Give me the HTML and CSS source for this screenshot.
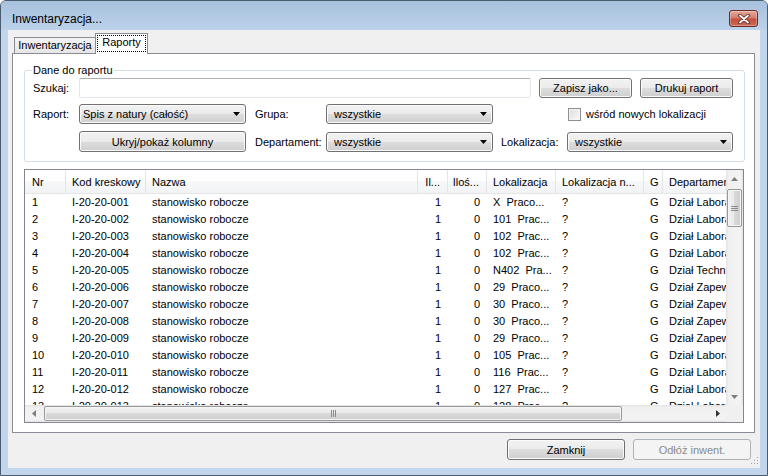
FILE: index.html
```html
<!DOCTYPE html>
<html lang="pl">

<head>
    <meta charset="UTF-8">
    <title>Inwentaryzacja...</title>
    <link rel="stylesheet" href="styles.css">
</head>

<body>
    <div class="window">
        <div class="titlebar">
            <span class="title">Inwentaryzacja...</span>
            <div class="close">
                <svg width="12" height="10" viewBox="0 0 12 10">
                    <path d="M2 1.5 L10 8.5 M10 1.5 L2 8.5" stroke="#5b2a24" stroke-width="3.6" stroke-linecap="round" />
                    <path d="M2 1.5 L10 8.5 M10 1.5 L2 8.5" stroke="#fff" stroke-width="1.8" stroke-linecap="round" />
                </svg>
            </div>
        </div>

        <div class="client">
            <div class="tabs">
                <div class="tab">Inwentaryzacja</div>
                <div class="tab active"><span class="focus">Raporty</span></div>
            </div>

            <div class="panel">
                <fieldset class="group">
                    <legend>Dane do raportu</legend>
                    <div class="row r1">
                        <span class="lbl">Szukaj:</span>
                        <div class="text"></div>
                        <div class="btn w93 ml8">Zapisz jako...</div>
                        <div class="btn w93 ml8">Drukuj raport</div>
                    </div>
                    <div class="row r2">
                        <span class="lbl">Raport:</span>
                        <div class="btn combo first">
                            <span>Spis z natury (całość)</span>
                            <svg width="7" height="4" viewBox="0 0 7 4"><polygon points="0,0 7,0 3.5,4" fill="#000" /></svg>
                        </div>
                        <span class="lbl2">Grupa:</span>
                        <div class="btn combo">
                            <span>wszystkie</span>
                            <svg width="7" height="4" viewBox="0 0 7 4"><polygon points="0,0 7,0 3.5,4" fill="#000" /></svg>
                        </div>
                        <span class="check"></span>
                        <span class="check-lbl">wśród nowych lokalizacji</span>
                    </div>
                    <div class="row r3">
                        <div class="btn wide">Ukryj/pokaż kolumny</div>
                        <span class="lbl2">Departament:</span>
                        <div class="btn combo">
                            <span>wszystkie</span>
                            <svg width="7" height="4" viewBox="0 0 7 4"><polygon points="0,0 7,0 3.5,4" fill="#000" /></svg>
                        </div>
                        <span class="lbl3">Lokalizacja:</span>
                        <div class="btn combo last">
                            <span>wszystkie</span>
                            <svg width="7" height="4" viewBox="0 0 7 4"><polygon points="0,0 7,0 3.5,4" fill="#000" /></svg>
                        </div>
                    </div>
                </fieldset>

                <div class="list">
                    <div class="list-body">
                        <div class="lrow hdr">
                            <span>Nr</span><span>Kod kreskowy</span><span>Nazwa</span><span class="num">Il...</span><span class="num">Iloś...</span><span>Lokalizacja</span><span>Lokalizacja n...</span><span>G</span><span>Departament</span>
                        </div>
                        <div class="lrow"><span>1</span><span>I-20-20-001</span><span>stanowisko robocze</span><span class="num">1</span><span class="num">0</span><span>X  Praco...</span><span>?</span><span>G</span><span>Dział Labora</span></div>
                        <div class="lrow"><span>2</span><span>I-20-20-002</span><span>stanowisko robocze</span><span class="num">1</span><span class="num">0</span><span>101  Prac...</span><span>?</span><span>G</span><span>Dział Labora</span></div>
                        <div class="lrow"><span>3</span><span>I-20-20-003</span><span>stanowisko robocze</span><span class="num">1</span><span class="num">0</span><span>102  Prac...</span><span>?</span><span>G</span><span>Dział Labora</span></div>
                        <div class="lrow"><span>4</span><span>I-20-20-004</span><span>stanowisko robocze</span><span class="num">1</span><span class="num">0</span><span>102  Prac...</span><span>?</span><span>G</span><span>Dział Labora</span></div>
                        <div class="lrow"><span>5</span><span>I-20-20-005</span><span>stanowisko robocze</span><span class="num">1</span><span class="num">0</span><span>N402  Pra...</span><span>?</span><span>G</span><span>Dział Techn</span></div>
                        <div class="lrow"><span>6</span><span>I-20-20-006</span><span>stanowisko robocze</span><span class="num">1</span><span class="num">0</span><span>29  Praco...</span><span>?</span><span>G</span><span>Dział Zapew</span></div>
                        <div class="lrow"><span>7</span><span>I-20-20-007</span><span>stanowisko robocze</span><span class="num">1</span><span class="num">0</span><span>30  Praco...</span><span>?</span><span>G</span><span>Dział Zapew</span></div>
                        <div class="lrow"><span>8</span><span>I-20-20-008</span><span>stanowisko robocze</span><span class="num">1</span><span class="num">0</span><span>30  Praco...</span><span>?</span><span>G</span><span>Dział Zapew</span></div>
                        <div class="lrow"><span>9</span><span>I-20-20-009</span><span>stanowisko robocze</span><span class="num">1</span><span class="num">0</span><span>29  Praco...</span><span>?</span><span>G</span><span>Dział Zapew</span></div>
                        <div class="lrow"><span>10</span><span>I-20-20-010</span><span>stanowisko robocze</span><span class="num">1</span><span class="num">0</span><span>105  Prac...</span><span>?</span><span>G</span><span>Dział Labora</span></div>
                        <div class="lrow"><span>11</span><span>I-20-20-011</span><span>stanowisko robocze</span><span class="num">1</span><span class="num">0</span><span>116  Prac...</span><span>?</span><span>G</span><span>Dział Labora</span></div>
                        <div class="lrow"><span>12</span><span>I-20-20-012</span><span>stanowisko robocze</span><span class="num">1</span><span class="num">0</span><span>127  Prac...</span><span>?</span><span>G</span><span>Dział Labora</span></div>
                        <div class="lrow"><span>13</span><span>I-20-20-013</span><span>stanowisko robocze</span><span class="num">1</span><span class="num">0</span><span>128  Prac...</span><span>?</span><span>G</span><span>Dział Labora</span></div>
                    </div>

                    <div class="vscroll">
                        <div class="arrow">
                            <svg width="7" height="4" viewBox="0 0 7 4"><polygon points="0,4 7,4 3.5,0" fill="#7d7d7d" /></svg>
                        </div>
                        <div class="track">
                            <div class="thumb">
                                <svg width="7" height="7" viewBox="0 0 7 7">
                                    <path d="M0 1.5 H7 M0 3.5 H7 M0 5.5 H7" stroke="#8a8a8a" stroke-width="1" />
                                </svg>
                            </div>
                        </div>
                        <div class="arrow">
                            <svg width="7" height="4" viewBox="0 0 7 4"><polygon points="0,0 7,0 3.5,4" fill="#7d7d7d" /></svg>
                        </div>
                    </div>

                    <div class="hscroll">
                        <div class="arrow">
                            <svg width="4" height="7" viewBox="0 0 4 7"><polygon points="4,0 4,7 0,3.5" fill="#7d7d7d" /></svg>
                        </div>
                        <div class="track">
                            <div class="thumb">
                                <svg width="7" height="7" viewBox="0 0 7 7">
                                    <path d="M1.5 0 V7 M3.5 0 V7 M5.5 0 V7" stroke="#8a8a8a" stroke-width="1" />
                                </svg>
                            </div>
                        </div>
                        <div class="arrow">
                            <svg width="4" height="7" viewBox="0 0 4 7"><polygon points="0,0 0,7 4,3.5" fill="#333" /></svg>
                        </div>
                    </div>

                    <div class="corner"></div>
                </div>
            </div>

            <div class="actions">
                <div class="btn act">Zamknij</div>
                <div class="btn act disabled">Odłóż inwent.</div>
            </div>

            <svg class="grip" width="10" height="10" viewBox="0 0 10 10">
                <rect x="8" y="0" width="1" height="1" fill="#a0a0a0" />
                <rect x="5" y="3" width="1" height="1" fill="#a0a0a0" />
                <rect x="8" y="3" width="1" height="1" fill="#a0a0a0" />
                <rect x="2" y="6" width="1" height="1" fill="#a0a0a0" />
                <rect x="5" y="6" width="1" height="1" fill="#a0a0a0" />
                <rect x="8" y="6" width="1" height="1" fill="#a0a0a0" />
            </svg>
        </div>
    </div>
</body>

</html>
```

FILE: styles.css
```css
* {
    margin: 0;
    padding: 0;
    box-sizing: border-box;
}

body {
    width: 768px;
    height: 476px;
    overflow: hidden;
    font-family: "Liberation Sans", Arial, sans-serif;
    font-size: 11px;
    color: #000;
    background: #fff;
}

.window {
    width: 768px;
    height: 476px;
    display: flex;
    flex-direction: column;
    border: 1px solid #4a5d70;
    border-radius: 6px 6px 0 0;
    background: #c1d6ed;
}

.titlebar {
    flex: none;
    height: 29px;
    display: flex;
    align-items: center;
    padding: 6px 9px 0 11px;
    border-radius: 5px 5px 0 0;
    background: linear-gradient(#a7c0dc, #bcd2ea);
}

.title {
    font-size: 12px;
}

.close {
    margin-left: auto;
    width: 29px;
    height: 17px;
    display: flex;
    align-items: center;
    justify-content: center;
    border: 1px solid #6c2a24;
    border-radius: 3px;
    background: linear-gradient(#e4a89b, #d27f6e 45%, #c3503b 55%, #cb6a55);
    box-shadow: inset 0 0 0 1px rgba(255, 255, 255, .3);
}

.client {
    flex: 1;
    min-height: 0;
    margin: 0 7px 7px;
    display: flex;
    flex-direction: column;
    padding: 3px 5px 0 4px;
    background: #f0f0f0;
    position: relative;
}

/* tabs */
.tabs {
    flex: none;
    height: 20px;
    display: flex;
    align-items: flex-end;
    margin-left: 2px;
}

.tab {
    width: 82px;
    height: 16px;
    line-height: 15px;
    text-align: center;
    border: 1px solid #898c95;
    border-bottom: none;
    background: linear-gradient(#f3f3f3, #e6e6e6);
}

.tab.active {
    width: 53px;
    height: 21px;
    margin-left: -1px;
    margin-bottom: -1px;
    padding: 1px 1px 0;
    background: #fff;
    position: relative;
}

.focus {
    display: block;
    height: 17px;
    line-height: 15px;
    outline: 1px dotted #000;
    outline-offset: -1px;
}

.panel {
    flex: 1;
    min-height: 0;
    display: flex;
    flex-direction: column;
    padding: 10px 9px 9px 11px;
    border: 1px solid #898c95;
    background: #fff;
}

/* group box */
.group {
    flex: none;
    border: 1px solid #d5dfe5;
    border-radius: 3px;
    padding: 1px 9px 9px 8px;
}

.group legend {
    line-height: 13px;
    padding: 0 1px;
    margin-left: -1px;
}

.row {
    display: flex;
    align-items: center;
    height: 20px;
}

.r2 {
    margin-top: 6px;
}

.r3 {
    margin-top: 7px;
    height: 21px;
}

.lbl {
    width: 46px;
    flex: none;
}

.lbl2 {
    width: 71px;
    margin-left: 9px;
    flex: none;
}

.lbl3 {
    width: 66px;
    margin-left: 8px;
    flex: none;
}

.text {
    width: 452px;
    height: 20px;
    border: 1px solid;
    border-color: #abadb3 #e2e3ea #e3e9ef #e2e3ea;
    border-radius: 2px;
    background: #fff;
}

.btn {
    flex: none;
    height: 20px;
    display: flex;
    align-items: center;
    justify-content: center;
    border: 1px solid #707070;
    border-radius: 3px;
    background: linear-gradient(#f2f2f2, #ebebeb 50%, #dddddd 50%, #cfcfcf);
    box-shadow: inset 0 0 0 1px #fbfbfb;
}

.w93 {
    width: 93px;
}

.ml8 {
    margin-left: 8px;
}

.combo {
    width: 167px;
    justify-content: space-between;
    padding: 0 5px 0 7px;
}

.combo.first {
    padding-left: 3px;
}

.combo.last {
    width: 166px;
}

.wide {
    width: 167px;
    height: 21px;
    margin-left: 46px;
}

.check {
    width: 13px;
    height: 13px;
    margin-left: 75px;
    border: 1px solid #8e8f8f;
    background: linear-gradient(135deg, #dcdcdc, #fbfbfb);
    box-shadow: inset 0 0 0 1px #f4f4f4;
}

.check-lbl {
    margin-left: 5px;
}

/* list view */
.list {
    flex: 1;
    min-height: 0;
    margin: 7px 1px 0 0;
    display: grid;
    grid-template-columns: minmax(0, 1fr) 17px;
    grid-template-rows: minmax(0, 1fr) 17px;
    border: 1px solid #828790;
    background: #fff;
    overflow: hidden;
}

.list-body {
    min-height: 0;
    overflow: hidden;
}

.lrow {
    display: grid;
    grid-template-columns: 41px 80px 272px 30px 39px 69px 88px 19px 140px;
    width: 778px;
    height: 17px;
    line-height: 17px;
}

.lrow span {
    padding-left: 6px;
    white-space: pre;
    overflow: hidden;
}

.lrow span:first-child {
    padding-left: 7px;
}

.lrow span.num {
    padding: 0 7px 0 0;
    text-align: right;
}

.hdr {
    height: 24px;
    line-height: 25px;
    border-bottom: 1px solid #e5e5e5;
    background: linear-gradient(#fff, #fff 50%, #f7f8f9 50%, #f2f3f5);
}

.hdr span {
    border-right: 1px solid #e5e5e5;
}

/* scrollbars */
.vscroll,
.hscroll {
    display: flex;
    min-height: 0;
}

.vscroll {
    flex-direction: column;
    background: linear-gradient(to right, #e3e3e3, #f0f0f0 15%, #f3f3f3 85%, #e3e3e3);
}

.hscroll {
    background: linear-gradient(#e3e3e3, #f0f0f0 15%, #f3f3f3 85%, #e3e3e3);
}

.arrow {
    flex: none;
    width: 17px;
    height: 17px;
    display: flex;
    align-items: center;
    justify-content: center;
}

.track {
    flex: 1;
    min-height: 0;
    display: flex;
}

.vscroll .track {
    flex-direction: column;
    align-items: center;
}

.thumb {
    display: flex;
    align-items: center;
    justify-content: center;
    border: 1px solid #979797;
    border-radius: 2px;
    box-shadow: inset 0 0 0 1px #f6f6f6;
}

.vscroll .thumb {
    width: 15px;
    height: 38px;
    margin-top: 2px;
    background: linear-gradient(to right, #f1f1f1, #e9e9e9 50%, #d9d9d9 50%, #cdcdcd);
}

.hscroll .thumb {
    width: 578px;
    height: 15px;
    margin: 1px 0 0 2px;
    background: linear-gradient(#f1f1f1, #e9e9e9 50%, #d9d9d9 50%, #cdcdcd);
}

.corner {
    background: #f0f0f0;
}

/* bottom buttons */
.actions {
    flex: none;
    height: 35px;
    display: flex;
    justify-content: flex-end;
    align-items: flex-start;
    gap: 8px;
    padding: 6px 4px 0 0;
}

.act {
    width: 118px;
    height: 21px;
}

.disabled {
    color: #8a8a8a;
    border-color: #adb2b5;
    background: #f4f4f4;
    box-shadow: none;
}

.grip {
    position: absolute;
    right: 1px;
    bottom: 1px;
}
```
